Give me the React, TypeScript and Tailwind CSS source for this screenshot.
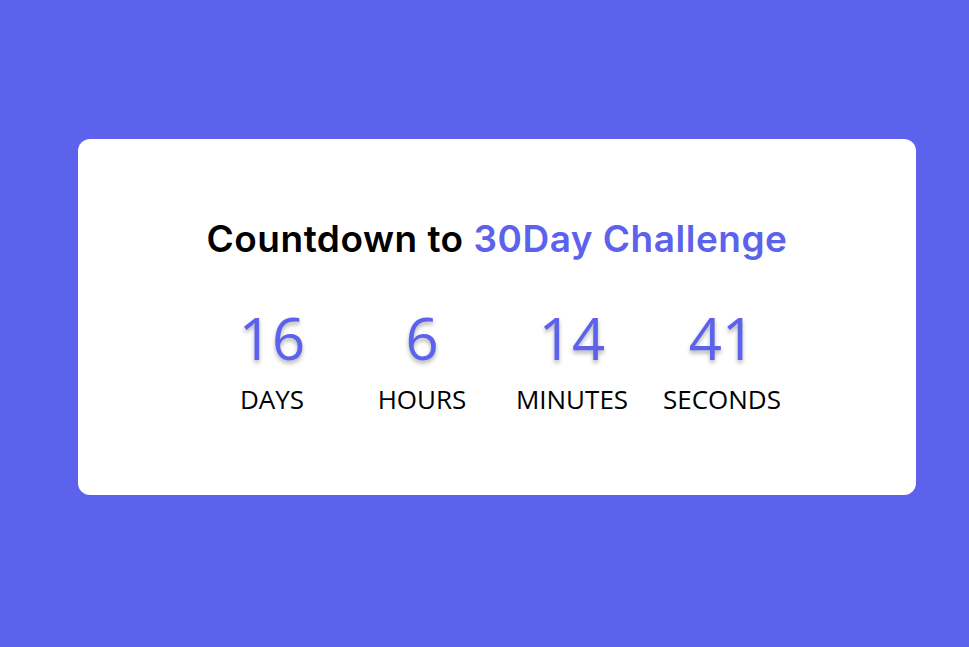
export default function App() {
  const units = [
    { value: "16", label: "DAYS" },
    { value: "6", label: "HOURS" },
    { value: "14", label: "MINUTES" },
    { value: "41", label: "SECONDS" },
  ]

  return (
    <div className="min-h-screen w-full bg-[#5c62ec] pt-[139px]">
      <div className="ml-[78px] flex h-[356px] w-[838px] flex-col items-center rounded-xl bg-white pt-[79px]">
        <h1 className="font-['Inter',sans-serif] text-[37px] font-semibold leading-[42px] tracking-[0.5px] text-black">
          Countdown to <span className="text-[#5c62ec]">30Day Challenge</span>
        </h1>
        <div className="mt-[46px] grid grid-cols-4">
          {units.map((u) => (
            <div key={u.label} className="flex w-[150px] flex-col items-center font-['Open_Sans',sans-serif]">
              <span className="text-[58px] leading-[64px] text-[#5c62ec] [text-shadow:0_3px_4px_rgba(0,0,0,0.3)]">
                {u.value}
              </span>
              <span className="mt-[13px] text-[26px] leading-[32px] text-black">{u.label}</span>
            </div>
          ))}
        </div>
      </div>
    </div>
  )
}
